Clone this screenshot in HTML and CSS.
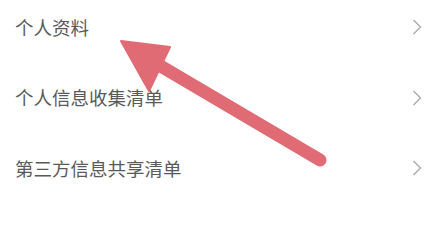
FILE: index.html
```html
<!DOCTYPE html>
<html lang="zh">
<head>
<meta charset="utf-8">
<link rel="stylesheet" href="styles.css">
</head>
<body>
<div class="page">
  <ul class="menu">
    <li class="row"><span class="label">个人资料</span><svg class="chev" viewBox="0 0 10 16" width="10" height="16"><polyline points="1.5,1 8.5,8 1.5,15" fill="none" stroke="#ababab" stroke-width="1.4"/></svg></li>
    <li class="row"><span class="label">个人信息收集清单</span><svg class="chev" viewBox="0 0 10 16" width="10" height="16"><polyline points="1.5,1 8.5,8 1.5,15" fill="none" stroke="#ababab" stroke-width="1.4"/></svg></li>
    <li class="row"><span class="label">第三方信息共享清单</span><svg class="chev" viewBox="0 0 10 16" width="10" height="16"><polyline points="1.5,1 8.5,8 1.5,15" fill="none" stroke="#ababab" stroke-width="1.4"/></svg></li>
  </ul>
  <svg class="arrow" viewBox="0 0 428 226" width="428" height="226">
    <line x1="152" y1="61" x2="320" y2="160" stroke="#e06b74" stroke-width="13" stroke-linecap="round"/>
    <polygon points="121,41 170,47 149,91" fill="#e06b74" stroke="#e06b74" stroke-width="2" stroke-linejoin="round"/>
  </svg>
</div>
</body>
</html>
```

FILE: styles.css
```css
html, body {
  margin: 0;
  padding: 0;
  background: #ffffff;
}
.page {
  position: relative;
  width: 428px;
  height: 226px;
  overflow: hidden;
  font-family: "Noto Sans CJK SC", "Noto Sans", sans-serif;
}
.menu {
  list-style: none;
  margin: 0;
  padding: 0;
  display: flex;
  flex-direction: column;
  gap: 16.5px;
}
.row {
  height: 54px;
  display: flex;
  align-items: center;
  justify-content: space-between;
  padding: 0 6px 0 15px;
}
.label {
  font-size: 18.5px;
  font-weight: 400;
  color: #5a5a5a;
  line-height: 1;
}
.chev {
  display: block;
}
.arrow {
  position: absolute;
  left: 0;
  top: 0;
}
```
